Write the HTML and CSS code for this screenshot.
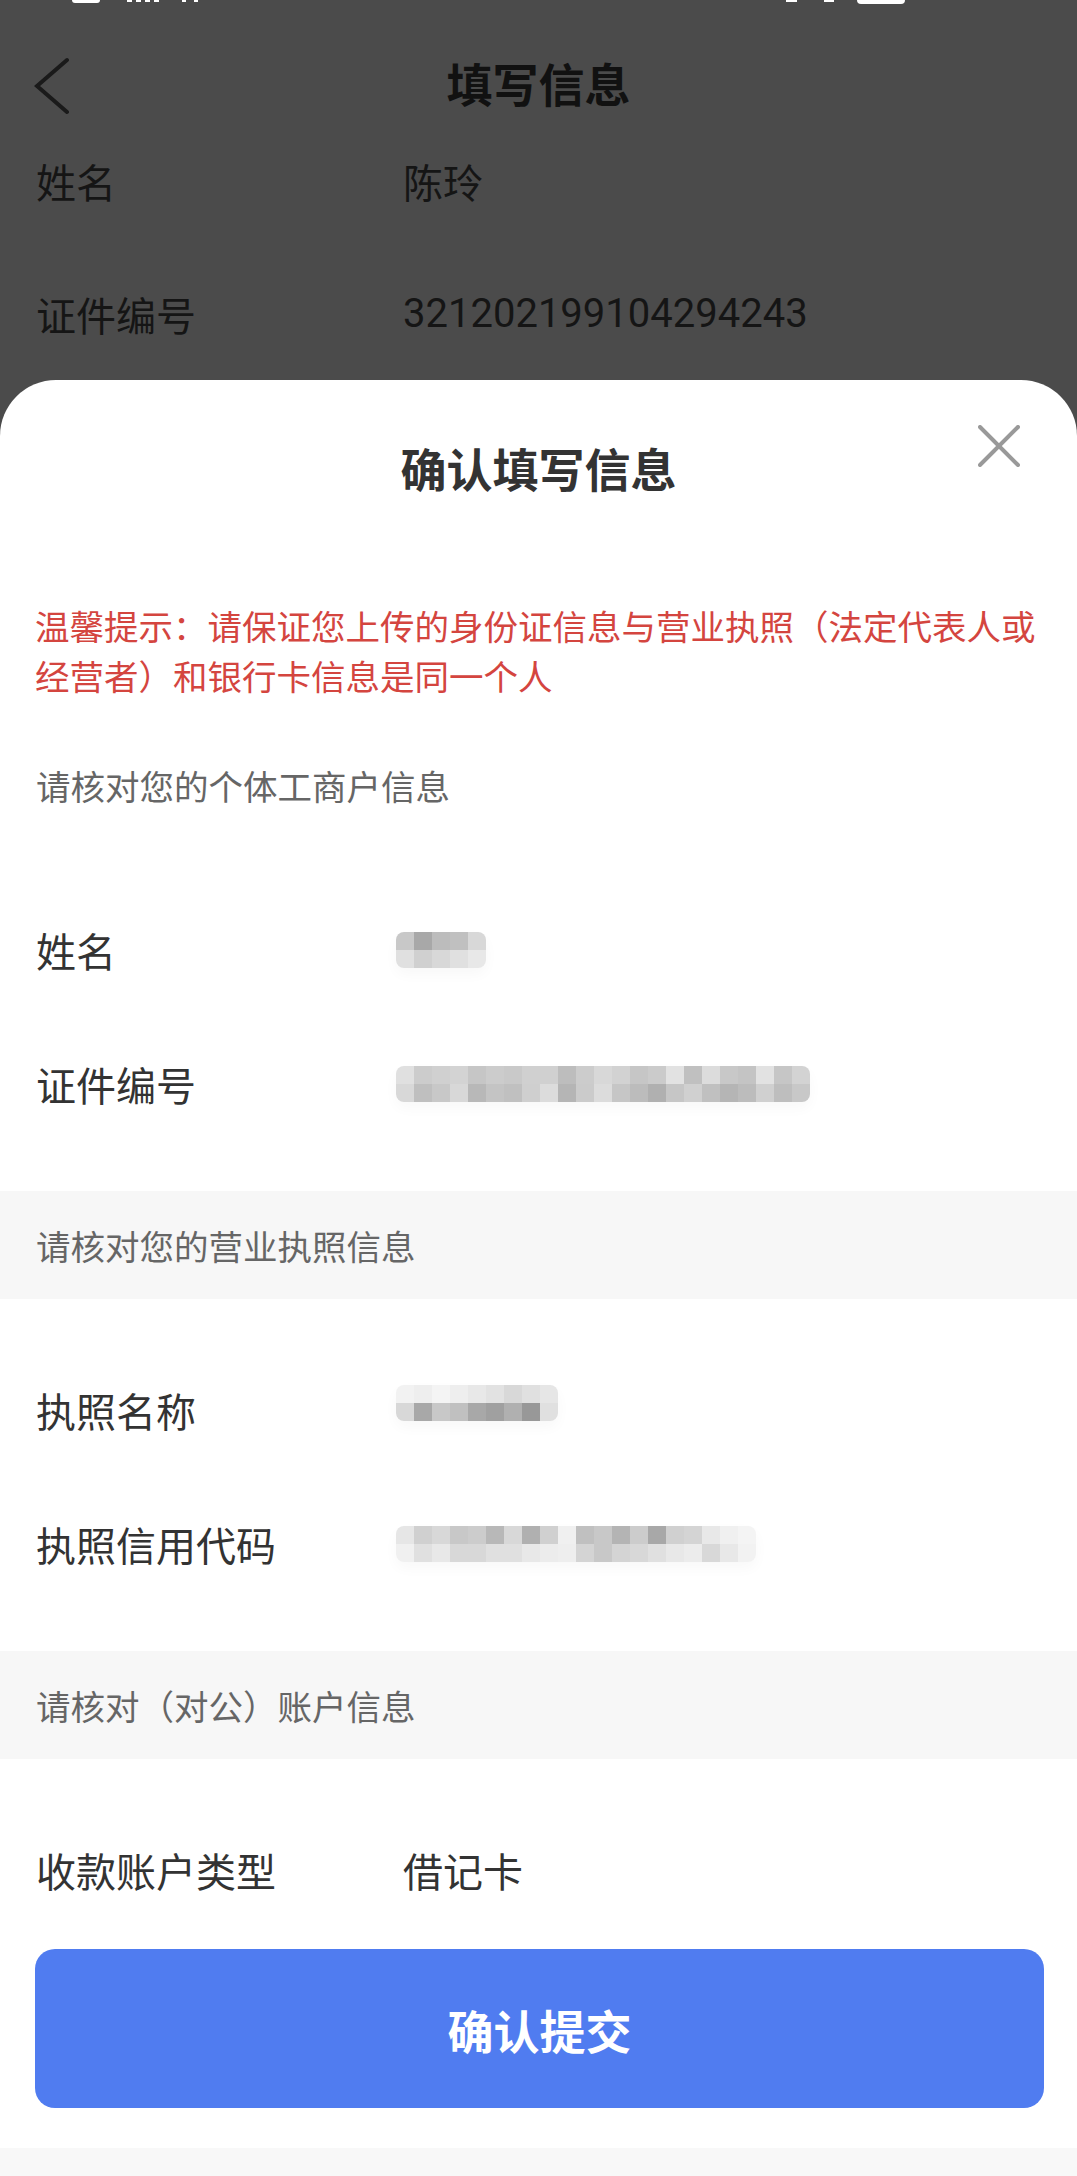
FILE: index.html
```html
<!DOCTYPE html>
<html lang="zh-CN">
<head>
    <meta charset="UTF-8">
    <meta name="viewport" content="width=device-width, initial-scale=1.0">
    <title>填写信息</title>
    <link rel="stylesheet" href="styles.css">
</head>
<body>
    <!-- pagina de fundo (coberta pela mascara) -->
    <div class="page">
        <div class="statusbar">
            <span class="sb sb-a"></span>
            <span class="sb sb-b"></span>
            <span class="sb sb-c"></span>
            <span class="sb-space"></span>
            <span class="sb sb-d"></span>
            <span class="sb sb-e"></span>
            <span class="sb sb-f"></span>
        </div>
        <div class="nav">
            <svg class="back" viewBox="0 0 36 58" fill="none" stroke="#1a1a1a" stroke-width="4" stroke-linecap="round" stroke-linejoin="miter">
                <polyline points="33,3 3,29 33,55"/>
            </svg>
            <h1>填写信息</h1>
            <span></span>
        </div>
        <div class="page-row"><span class="page-label">姓名</span><span>陈玲</span></div>
        <div class="page-row"><span class="page-label">证件编号</span><span>321202199104294243</span></div>
    </div>

    <div class="sheet">
        <div class="sheet-head">
            <h2>确认填写信息</h2>
            <svg class="close" viewBox="0 0 42 42" fill="none" stroke="#999" stroke-width="4" stroke-linecap="round">
                <line x1="2" y1="2" x2="40" y2="40"/>
                <line x1="40" y1="2" x2="2" y2="40"/>
            </svg>
        </div>
        <p class="notice">温馨提示：请保证您上传的身份证信息与营业执照（法定代表人或经营者）和银行卡信息是同一个人</p>

        <div class="group-title plain">请核对您的个体工商户信息</div>
        <div class="group">
            <div class="row">
                <span class="label">姓名</span>
                <span class="mosaic" data-top="c8 a8 bc c0 d8" data-bottom="e0 d0 d8 e0 e8"></span>
            </div>
            <div class="row">
                <span class="label">证件编号</span>
                <span class="mosaic" data-top="e0 cc d0 d3 c6 cc c9 d0 d0 bd cc d8 d2 c6 cb e2 c0 dc c8 c4 e2 c6 d3" data-bottom="d8 bf c8 d8 b8 c4 c0 cf dc b5 cb dc c6 bc b0 c6 d0 c0 b5 bc d0 be c8"></span>
            </div>
        </div>

        <div class="group-title">请核对您的营业执照信息</div>
        <div class="group">
            <div class="row">
                <span class="label">执照名称</span>
                <span class="mosaic raised" data-top="f2 ee f4 ee e8 e2 d8 e0 e6" data-bottom="d8 a8 c8 c0 a8 a0 b0 98 e0"></span>
            </div>
            <div class="row">
                <span class="label">执照信用代码</span>
                <span class="mosaic" data-top="e6 d0 d8 c8 cc b8 d8 b0 d0 f0 c0 c8 b4 cc a8 d0 d4 e8 f0 f4" data-bottom="f0 e0 e8 d8 d8 e0 e0 e8 ec ee d4 c8 d4 d8 e0 e8 ec d8 e8 f2"></span>
            </div>
        </div>

        <div class="group-title">请核对（对公）账户信息</div>
        <div class="group last">
            <div class="row">
                <span class="label">收款账户类型</span>
                <span class="value">借记卡</span>
            </div>
        </div>

        <button class="submit" type="button">确认提交</button>
        <div class="sheet-foot"></div>
    </div>

    <script>
        // monta os blocos do mosaico a partir dos tons guardados nos atributos
        document.querySelectorAll('.mosaic').forEach(function(el) {
            const top = el.dataset.top.split(' ');
            const bottom = el.dataset.bottom.split(' ');
            top.forEach(function(shade, i) {
                [shade, bottom[i]].forEach(function(s) {
                    const cell = document.createElement('i');
                    cell.style.background = '#' + s + s + s;
                    el.appendChild(cell);
                });
            });
        });
    </script>
</body>
</html>
```

FILE: styles.css
```css
:root {
    --mask: #4b4b4b;
    --text: #333333;
    --muted: #666666;
    --red: #d4453f;
    --blue: #507cf0;
    --band: #f7f7f7;
    --font: Roboto, "Noto Sans CJK SC", sans-serif;
}
body {
    margin: 0;
    width: 1077px;
    height: 2176px;
    overflow: hidden;
    position: relative;
    background-color: var(--mask);
    font-family: var(--font);
}
.page {
    color: #151515;
}
.statusbar {
    height: 24px;
    display: flex;
    align-items: flex-start;
    padding: 0 172px 0 72px;
}
.sb {
    display: block;
    height: 2px;
    background: #fff;
}
.sb-a {
    width: 28px;
    height: 3px;
    border-radius: 0 0 4px 4px;
}
.sb-b {
    margin-left: 27px;
    width: 34px;
    background: repeating-linear-gradient(90deg, #fff 0 5px, transparent 5px 9px);
}
.sb-c {
    margin-left: 21px;
    width: 24px;
    background: repeating-linear-gradient(90deg, #fff 0 4px, transparent 4px 12px);
}
.sb-space {
    flex: 1;
}
.sb-d {
    width: 11px;
}
.sb-e {
    margin-left: 27px;
    width: 10px;
}
.sb-f {
    margin-left: 23px;
    width: 48px;
    height: 4px;
    border-radius: 0 0 4px 4px;
}
.nav {
    display: grid;
    grid-template-columns: 1fr auto 1fr;
    align-items: center;
    height: 64px;
    padding-top: 30px;
    margin-bottom: -4px;
}
.back {
    width: 36px;
    height: 58px;
    margin-left: 34px;
}
.nav h1 {
    margin: 0;
    font-size: 46px;
    line-height: 64px;
    font-weight: 700;
    color: #111;
}
.page-row {
    display: flex;
    align-items: center;
    height: 133px;
    padding: 0 36px;
    font-size: 40px;
}
.page-label {
    width: 367px;
    flex-shrink: 0;
}

/* folha inferior */
.sheet {
    position: absolute;
    top: 380px;
    left: 0;
    right: 0;
    bottom: 0;
    background: #fff;
    border-radius: 56px 56px 0 0;
    overflow: hidden;
}
.sheet-head {
    position: relative;
    height: 182px;
    display: flex;
    align-items: center;
    justify-content: center;
}
.sheet-head h2 {
    margin: 0;
    font-size: 46px;
    line-height: 1;
    font-weight: 700;
    color: var(--text);
}
.close {
    position: absolute;
    top: 45px;
    right: 57px;
    width: 42px;
    height: 42px;
}
.notice {
    margin: 41px 0 0;
    padding: 0 30px 0 35px;
    font-size: 34.5px;
    line-height: 50px;
    color: var(--red);
}
.group-title {
    height: 108px;
    display: flex;
    align-items: center;
    padding: 0 36px;
    font-size: 34.5px;
    color: var(--muted);
    background: var(--band);
}
.group-title.plain {
    margin-top: 28px;
    background: #fff;
}
.group {
    padding: 44px 0 40px;
}
.group.last {
    padding-bottom: 12px;
}
.row {
    display: flex;
    align-items: center;
    height: 134px;
    padding: 0 36px;
    font-size: 40px;
    color: var(--text);
}
.label {
    width: 367px;
    flex-shrink: 0;
}
.value {
    color: var(--text);
}
.mosaic {
    display: grid;
    grid-auto-flow: column;
    grid-template-rows: repeat(2, 18px);
    grid-auto-columns: 18px;
    margin-left: -7px;
    border-radius: 8px;
    overflow: hidden;
    box-shadow: 0 6px 14px rgba(0, 0, 0, 0.03);
}
.mosaic.raised {
    margin-top: -14px;
}
.mosaic i {
    display: block;
}
.submit {
    display: block;
    width: calc(100% - 68px);
    height: 159px;
    margin: 0 33px 0 35px;
    border: none;
    border-radius: 20px;
    background: var(--blue);
    color: #fff;
    font-family: var(--font);
    font-size: 46px;
    font-weight: 700;
    cursor: pointer;
}
.sheet-foot {
    margin-top: 40px;
    height: 40px;
    background: #f8f8f8;
}
```
